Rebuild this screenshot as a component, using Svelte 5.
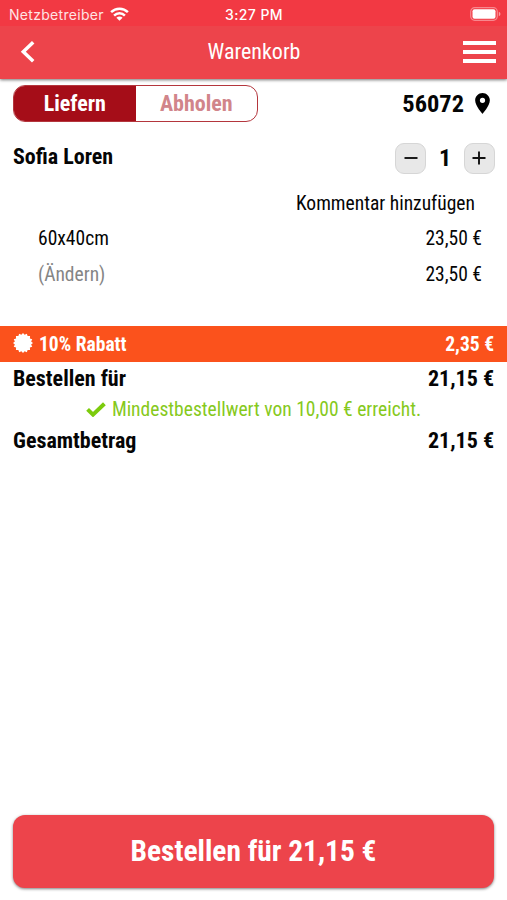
<script>
  const burst = Array.from({ length: 32 }, (_, i) => {
    const a = (i * Math.PI) / 16;
    const r = i % 2 ? 8.3 : 10;
    return `${(10 + r * Math.sin(a)).toFixed(2)},${(10 - r * Math.cos(a)).toFixed(2)}`;
  }).join(' ');
  let qty = $state(1);
</script>

<div class="screen">
  <header>
    <div class="status">
      <div class="carrier">
        <span>Netzbetreiber</span>
        <svg width="19" height="14" viewBox="0 0 19 14">
          <g fill="none" stroke="#fff" stroke-width="2.5">
            <path d="M1.1 5.2a12 12 0 0 1 16.8 0" />
            <path d="M4.1 8.6a7.6 7.6 0 0 1 10.8 0" />
          </g>
          <path d="M9.5 13.8 6.4 10.7a4.4 4.4 0 0 1 6.2 0z" fill="#fff" />
        </svg>
      </div>
      <span class="clock">3:27 PM</span>
      <svg class="battery" width="31" height="14" viewBox="0 0 31 14">
        <rect x=".7" y=".7" width="26.6" height="12.6" rx="4" fill="none" stroke="#fff" stroke-opacity=".4" stroke-width="1.2" />
        <rect x="2.5" y="2.3" width="23" height="9.4" rx="2" fill="#fff" />
        <path d="M28.8 4.8c1.3.5 1.6 1.3 1.6 2.2s-.3 1.7-1.6 2.2z" fill="#fff" fill-opacity=".5" />
      </svg>
    </div>
    <nav>
      <svg width="16" height="24" viewBox="0 0 16 24"><path d="M13.2 2.3 3.3 11.8l9.9 9.5" fill="none" stroke="#fff" stroke-width="3.5" /></svg>
      <h1>Warenkorb</h1>
      <div class="burger"><i></i><i></i><i></i></div>
    </nav>
  </header>

  <div class="top">
    <div class="tabs"><b class="on">Liefern</b><b>Abholen</b></div>
    <div class="zip">
      <b>56072</b>
      <svg width="15" height="21" viewBox="5 2 14 20"><path fill="#000" d="M12 2C8.13 2 5 5.13 5 9c0 5.25 7 13 7 13s7-7.75 7-13c0-3.87-3.13-7-7-7zm0 9.5a2.5 2.5 0 0 1 0-5 2.5 2.5 0 0 1 0 5z" /></svg>
    </div>
  </div>

  <div class="item">
    <b>Sofia Loren</b>
    <div class="stepper">
      <button aria-label="minus" onclick={() => (qty = Math.max(1, qty - 1))}><svg width="14" height="14" viewBox="0 0 14 14"><path d="M.5 7h13" stroke="#111" stroke-width="1.9" /></svg></button>
      <b>{qty}</b>
      <button aria-label="plus" onclick={() => (qty += 1)}><svg width="14" height="14" viewBox="0 0 14 14"><path d="M.5 7h13M7 .5v13" stroke="#111" stroke-width="1.9" /></svg></button>
    </div>
  </div>
  <div class="comment"><span>Kommentar hinzufügen</span></div>
  <div class="line"><span>60x40cm</span><span>23,50 €</span></div>
  <div class="line"><span class="muted">(Ändern)</span><span>23,50 €</span></div>

  <div class="discount">
    <svg width="20" height="20" viewBox="0 0 20 20"><polygon points={burst} fill="#fff" /></svg>
    <b>10% Rabatt</b><b class="amount">2,35 €</b>
  </div>
  <div class="sum"><b>Bestellen für</b><b>21,15 €</b></div>
  <div class="ok">
    <svg width="20" height="15" viewBox="0 0 20 15"><path d="M1.6 7.4 7 12.6 18.4 1.8" fill="none" stroke="#7ccb0c" stroke-width="4" /></svg>
    <span>Mindestbestellwert von 10,00 € erreicht.</span>
  </div>
  <div class="sum"><b>Gesamtbetrag</b><b>21,15 €</b></div>

  <button class="order"><span>Bestellen für 21,15 €</span></button>
</div>

<style>
  :global(body) { background: #fff; }
  .screen {
    box-sizing: border-box; width: 507px; height: 900px; overflow: hidden;
    display: flex; flex-direction: column; background: #fff; color: #050505;
    font: 19.55px/36px "Roboto Condensed", Roboto, sans-serif; font-stretch: 75%; white-space: nowrap;
  }
  svg { display: block; flex: none; }
  header { height: 79px; flex: none; color: #fff; background: #ed444b; box-shadow: 0 1px 3px rgba(0,0,0,.55); }
  .status {
    height: 26px; background: #f23943; display: grid; grid-template-columns: 1fr auto 1fr; align-items: center;
    padding: 0 6px 0 9px; box-sizing: border-box; font: 14px/26px Inter, sans-serif; font-stretch: 100%;
  }
  .carrier { display: flex; align-items: center; gap: 6px; color: #ffe4e5; letter-spacing: .3px; margin-top: -1px; }
  .carrier span { padding-top: 3px; }
  .clock { font-weight: 500; font-size: 14px; letter-spacing: .4px; margin-right: 2px; padding-top: 2px; }
  .battery { justify-self: end; margin-top: -1px; }
  nav { height: 51px; display: grid; grid-template-columns: 1fr auto 1fr; align-items: center; padding: 0 11px 0 20px; box-sizing: border-box; }
  h1 { margin: 0 8px 0 0; font-size: 22px; font-weight: 400; }
  .burger { width: 33px; display: flex; flex-direction: column; gap: 5px; justify-self: end; }
  .burger i { height: 4px; background: #fff; }
  .top { display: flex; justify-content: space-between; align-items: center; height: 37px; margin: 6px 17px 0 13px; flex: none; }
  .tabs { display: flex; box-sizing: border-box; width: 245px; height: 37px; border: 1.5px solid #b4363d; border-radius: 12px; overflow: hidden; font-size: 22px; line-height: 35px; text-align: center; }
  .tabs b { flex: 1; color: #d1858a; }
  .tabs .on { background: #a50d18; color: #fff; }
  .zip { display: flex; align-items: center; gap: 11px; font-size: 24.4px; }
  .zip svg { margin-bottom: 1px; }
  .item { display: flex; justify-content: space-between; height: 36px; margin: 18px 12px 0 13px; font-size: 22px; line-height: 33px; flex: none; }
  .stepper { display: flex; align-items: center; justify-content: space-between; width: 100px; font-size: 24px; }
  .stepper button { width: 31px; height: 31px; padding: 0; display: grid; place-items: center; border: 1px solid #d6d6d6; border-radius: 9px; background: #e8e8e8; }
  .comment { display: flex; justify-content: flex-end; height: 35px; padding-right: 32px; margin-top: 10px; flex: none; }
  .line { display: flex; justify-content: space-between; height: 36px; padding: 0 25px 0 38px; flex: none; }
  .muted { color: #858585; }
  .discount { display: flex; align-items: center; height: 36px; line-height: 34px; margin-top: 33px; padding: 0 13px; background: #fb521c; color: #fff; flex: none; }
  .discount svg { margin: 0 6px 2px 0; }
  .discount b { padding-top: 2px; }
  .amount { margin-left: auto; }
  .sum { display: flex; justify-content: space-between; height: 32px; line-height: 33px; padding: 0 13px; font-size: 22px; flex: none; }
  .ok { display: flex; justify-content: center; align-items: center; gap: 6px; height: 30px; line-height: 31px; color: #86c91c; flex: none; }
  .ok span { padding-top: 1px; }
  .order { font: bold 29.4px/73px "Roboto Condensed", Roboto, sans-serif; font-stretch: 75%; color: #fff; background: #ed444b; border: 0; border-radius: 12px; height: 73px; margin: auto 13px 12px; padding: 0; box-shadow: 0 1px 3px rgba(0,0,0,.5); }
</style>
